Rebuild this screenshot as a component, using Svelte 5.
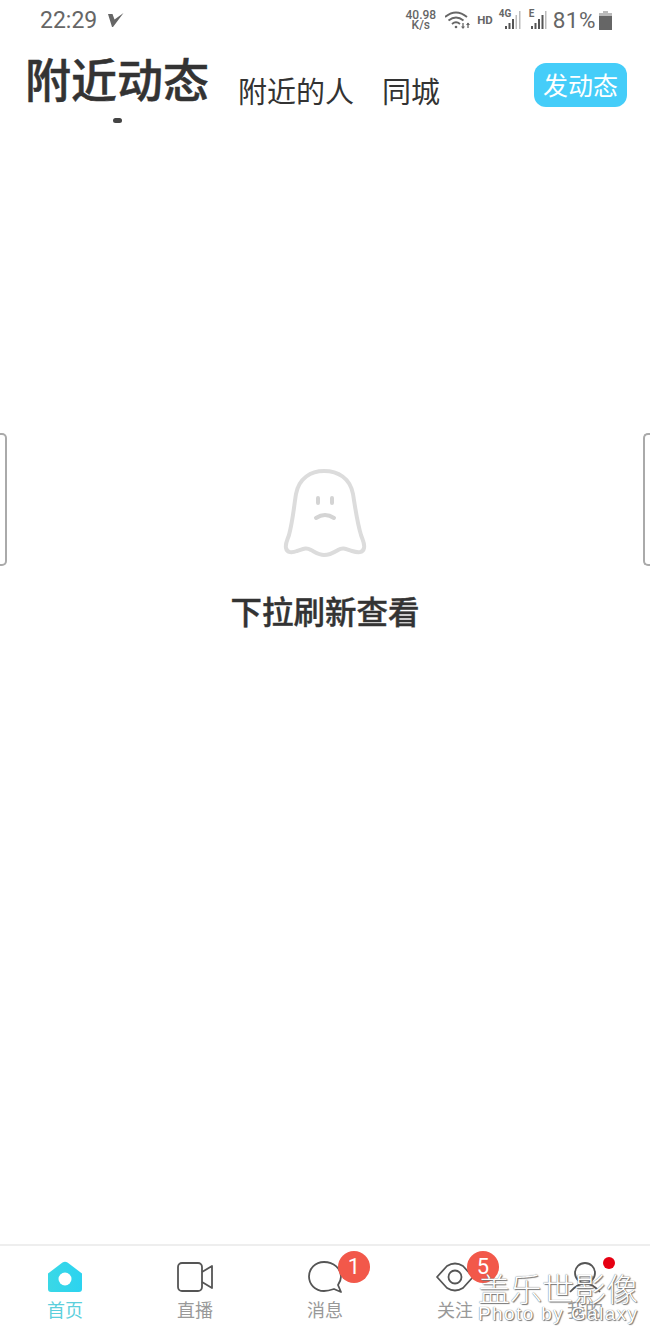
<script>
    const tabs = [
        { label: "首页", icon: "home", active: true },
        { label: "直播", icon: "video" },
        { label: "消息", icon: "chat", badge: "1" },
        { label: "关注", icon: "eye", badge: "5" },
        { label: "我的", icon: "user", dot: true },
    ];
</script>

<div class="page">
    <div class="status">
        <div class="status-left">
            <span class="time">22:29</span>
            <svg width="16" height="14" viewBox="0 0 16 14">
                <path d="M0 1 L4.500 1 L6.500 6.500 L15.500 0 L5 14 L4 14 Z" fill="#666" />
            </svg>
        </div>
        <div class="status-right">
            <div class="speed"><span>40.98</span><span>K/s</span></div>
            <svg class="wifi" width="26" height="20" viewBox="0 0 26 20" fill="none" stroke="#666" stroke-width="1.800">
                <path d="M0 7 Q11 -2 22 7" />
                <path d="M3.500 10.500 Q11 4.500 18.500 10.500" />
                <path d="M7 14 Q11 10.500 15 14" />
                <circle cx="11" cy="17" r="1.300" fill="#666" stroke="none" />
                <path d="M18 13v5M23 18v-5" stroke-width="1.300" />
                <path d="M16 16.500l2 2.500 2-2.500M21 15l2-2.500 2 2.500" fill="#666" stroke="none" />
            </svg>
            <span class="hd">HD</span>
            <div class="signal">
                <span class="net">4G</span>
                <svg width="16" height="18" viewBox="0 0 16 18">
                    <rect x="0" y="15" width="2" height="3" fill="#555" />
                    <rect x="3.500" y="12" width="2" height="6" fill="#555" />
                    <rect x="7" y="8" width="2" height="10" fill="#555" />
                    <rect x="10.500" y="4" width="1.500" height="14" fill="#bbb" />
                    <rect x="14" y="0" width="1.500" height="18" fill="#bbb" />
                </svg>
            </div>
            <div class="signal">
                <span class="net e">E</span>
                <svg width="16" height="18" viewBox="0 0 16 18">
                    <rect x="0" y="15" width="2" height="3" fill="#555" />
                    <rect x="3.500" y="12" width="2" height="6" fill="#555" />
                    <rect x="7" y="8" width="2" height="10" fill="#555" />
                    <rect x="10.500" y="4" width="2" height="14" fill="#555" />
                    <rect x="14" y="0" width="1.500" height="18" fill="#bbb" />
                </svg>
            </div>
            <span class="battery-text">81%</span>
            <svg width="13" height="19" viewBox="0 0 13 19">
                <rect x="4" y="0" width="5" height="2" fill="#bbb" />
                <rect x="0" y="2" width="13" height="3" fill="#bbb" />
                <rect x="0" y="5" width="13" height="14" fill="#666" />
            </svg>
        </div>
    </div>

    <header class="header">
        <div class="title-tab">
            <span class="title">附近动态</span>
            <span class="indicator"></span>
        </div>
        <span class="tab">附近的人</span>
        <span class="tab">同城</span>
        <button class="post">发动态</button>
    </header>

    <main class="empty">
        <svg class="ghost" width="84" height="90" viewBox="0 0 84 90" fill="none" stroke="#dcdcdc" stroke-width="4" stroke-linecap="round" stroke-linejoin="round">
            <path d="M3 80 C2 76 4 73 6 67 C10 52 11 38 13 26 C16 10 28 3 41 3 C55 3 67 10 70 26 C72 38 74 54 78 67 C80 73 82 76 81 80 C80 85 75 85 69 83 C63 81 60 79 55 82 C50 85 47 87 41 87 C36 87 32 84 28 82 C23 79 20 81 14 83 C9 85 4 85 3 80 Z" />
            <path d="M35 30v5M49 30v5" stroke="#d4d4d4" />
            <path d="M33 50 Q42 44 51 50" stroke="#d4d4d4" />
        </svg>
        <p class="hint">下拉刷新查看</p>
    </main>

    <nav class="tabbar">
        {#each tabs as tab}
            <div class="tab-item" class:active={tab.active}>
                <div class="icon">
                    {#if tab.icon === "home"}
                        <svg width="36" height="32" viewBox="0 0 36 32">
                            <defs>
                                <linearGradient id="homefill" x1="0" x2="1" y1="0" y2="0">
                                    <stop offset="0" stop-color="#3ad8e6" />
                                    <stop offset="1" stop-color="#2cd3f0" />
                                </linearGradient>
                            </defs>
                            <path fill="url(#homefill)" d="M1 12.500 L15.500 1.500 Q18 0 20.500 1.500 L35 12.500 V28 Q35 31 32 31 H4 Q1 31 1 28 Z" />
                            <circle cx="18" cy="18" r="6.500" fill="#fff" />
                        </svg>
                    {:else if tab.icon === "video"}
                        <svg width="36" height="30" viewBox="0 0 36 30" fill="none" stroke="#555" stroke-width="1.800" stroke-linejoin="round">
                            <rect x="1" y="1" width="24" height="28" rx="4" />
                            <path d="M25 10 L35 4 V26 L25 20" />
                        </svg>
                    {:else if tab.icon === "chat"}
                        <svg width="36" height="34" viewBox="0 0 36 34" fill="none" stroke="#555" stroke-width="1.800" stroke-linejoin="round">
                            <path d="M17 2 C8 2 2 9 2 16.500 C2 24 8 31 17 31 C21 31 24 30 27 29 L34 32 L31 25 C33 22 34 19 34 16.500 C34 9 27 2 17 2 Z" />
                        </svg>
                    {:else if tab.icon === "eye"}
                        <svg width="38" height="30" viewBox="0 0 38 30" fill="none" stroke="#555" stroke-width="1.800" stroke-linejoin="round">
                            <path d="M1 15 L11 4 Q19 -1 27 4 L37 15 L27 26 Q19 31 11 26 Z" />
                            <circle cx="19" cy="15" r="6.500" />
                        </svg>
                    {:else}
                        <svg width="36" height="32" viewBox="0 0 36 32" fill="none" stroke="#555" stroke-width="1.800">
                            <circle cx="18" cy="12" r="10" />
                            <path d="M3 31 Q18 14 33 31" />
                        </svg>
                    {/if}
                    {#if tab.badge}
                        <span class="badge">{tab.badge}</span>
                    {/if}
                    {#if tab.dot}
                        <span class="dot"></span>
                    {/if}
                </div>
                <span class="tab-label">{tab.label}</span>
            </div>
        {/each}
    </nav>

    <span class="edge left"></span>
    <span class="edge right"></span>

    <div class="watermark">
        <span class="wm-top">盖乐世影像</span>
        <span class="wm-bottom">Photo by Galaxy</span>
    </div>
</div>

<style>
    :global(body) {
        margin: 0;
        background: #fff;
    }

    .page {
        position: relative;
        width: 650px;
        height: 1336px;
        display: flex;
        flex-direction: column;
        overflow: hidden;
        background: #fff;
        font-family: "Noto Sans CJK SC", "Noto Sans", sans-serif;
    }

    .status {
        height: 40px;
        display: flex;
        justify-content: space-between;
        align-items: center;
        padding: 0 38px 0 40px;
        color: #666;
        font-family: Roboto, sans-serif;
    }

    .status-left {
        display: flex;
        align-items: center;
        gap: 11px;
    }

    .time {
        font-size: 23px;
    }

    .status-right {
        display: flex;
        align-items: center;
    }

    .speed {
        display: flex;
        flex-direction: column;
        align-items: center;
        font-size: 12px;
        font-weight: 500;
        line-height: 10px;
        margin-right: 9px;
    }

    .hd {
        font-size: 11.500px;
        font-weight: 700;
        margin: 0 6px 0 6px;
    }

    .signal {
        position: relative;
        width: 22px;
        height: 18px;
        margin-right: 4px;
        display: flex;
        justify-content: flex-end;
    }

    .net {
        position: absolute;
        left: 0;
        top: -3px;
        font-size: 10px;
        font-weight: 700;
    }

    .net.e {
        left: 4px;
    }

    .battery-text {
        font-size: 22.500px;
        margin: 0 3px 0 2px;
        letter-spacing: 0.5px;
    }

    .header {
        height: 92px;
        display: flex;
        align-items: flex-start;
        padding: 0 23px 0 25px;
        color: #333;
    }

    .title-tab {
        display: flex;
        flex-direction: column;
        align-items: center;
    }

    .title {
        font-size: 46px;
        font-weight: 500;
        line-height: 56px;
        margin-top: 9px;
        -webkit-text-stroke: 0.5px #333;
    }

    .indicator {
        width: 9px;
        height: 5px;
        margin-top: 13px;
        border-radius: 3px;
        background: #444;
    }

    .tab {
        font-size: 29px;
        line-height: 40px;
        margin: 30px 0 0 29px;
    }

    .tab + .tab {
        margin-left: 28px;
    }

    .post {
        margin: 23px 0 0 auto;
        width: 93px;
        height: 44px;
        border: none;
        border-radius: 12px;
        padding: 0 0 2px;
        background: #45cdf9;
        color: #fff;
        font-family: inherit;
        font-size: 25px;
    }

    .empty {
        flex: 1;
        display: flex;
        flex-direction: column;
        align-items: center;
        padding-top: 336px;
    }

    .ghost {
        display: block;
    }

    .hint {
        margin: 30px 0 0;
        font-size: 31.500px;
        font-weight: 500;
        line-height: 44px;
        color: #333;
        -webkit-text-stroke: 0.4px #333;
    }

    .tabbar {
        height: 92px;
        display: flex;
        padding-top: 15px;
        box-sizing: border-box;
        border-top: 2px solid #eee;
    }

    .tab-item {
        flex: 1;
        display: flex;
        flex-direction: column;
        align-items: center;
        color: #999;
    }

    .tab-item.active {
        color: #5ccfdc;
    }

    .icon {
        position: relative;
        height: 32px;
        display: flex;
        align-items: center;
        justify-content: center;
    }

    .tab-label {
        font-size: 18px;
        line-height: 26px;
        margin-top: 3px;
    }

    .badge {
        position: absolute;
        top: -10px;
        left: 31px;
        width: 32px;
        height: 32px;
        border-radius: 50%;
        background: #f2584a;
        color: #fff;
        font-family: Roboto, sans-serif;
        font-size: 22px;
        line-height: 32px;
        text-align: center;
    }

    .dot {
        position: absolute;
        top: -4px;
        left: 36px;
        width: 12px;
        height: 12px;
        border-radius: 50%;
        background: #e60012;
    }

    .edge {
        position: absolute;
        top: 433px;
        width: 7px;
        height: 133px;
        box-sizing: border-box;
        border: 2px solid #aaa;
    }

    .edge.left {
        left: 0;
        border-left: none;
        border-radius: 0 5px 5px 0;
    }

    .edge.right {
        right: 0;
        border-right: none;
        border-radius: 5px 0 0 5px;
    }

    .watermark {
        position: absolute;
        left: 478px;
        top: 1271px;
        display: flex;
        flex-direction: column;
        color: #fff;
        text-shadow: 0 0 1px #555, 1px 1px 1px #777;
        white-space: nowrap;
    }

    .wm-top {
        font-size: 32px;
        line-height: 33px;
        font-weight: 300;
    }

    .wm-bottom {
        font-family: "Liberation Sans", sans-serif;
        font-size: 19px;
        line-height: 20px;
        letter-spacing: 1.400px;
    }
</style>
